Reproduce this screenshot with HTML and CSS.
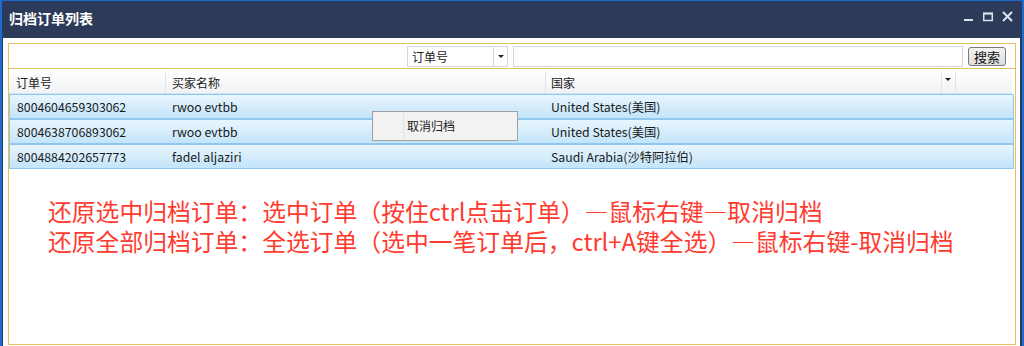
FILE: index.html
```html
<!DOCTYPE html>
<html lang="zh-CN">
<head>
    <meta charset="UTF-8">
    <meta name="viewport" content="width=device-width, initial-scale=1.0">
    <title>归档订单列表</title>
    <link rel="stylesheet" href="styles.css">
</head>
<body>

    <!-- Window -->
    <div class="window">
        <div class="titlebar">
            <span class="title">归档订单列表</span>
            <div class="controls">
                <svg width="10" height="10" viewBox="0 0 10 10"><rect x="0" y="7" width="9" height="2" fill="#dde3ec"/></svg>
                <svg width="10" height="10" viewBox="0 0 10 10"><rect x="0.75" y="1.5" width="8.5" height="7" fill="none" stroke="#dde3ec" stroke-width="1.5"/><rect x="0" y="0.5" width="10" height="2" fill="#dde3ec"/></svg>
                <svg width="11" height="11" viewBox="0 0 11 11"><path d="M1 1 L10 10 M10 1 L1 10" stroke="#dde3ec" stroke-width="2"/></svg>
            </div>
        </div>

        <div class="content">
            <div class="panel">
                <!-- Search bar -->
                <div class="toolbar">
                    <div class="select">
                        <span class="select-text">订单号</span>
                        <span class="select-arrow"></span>
                    </div>
                    <input type="text" class="search-input">
                    <button class="search-btn">搜索</button>
                </div>

                <!-- Grid -->
                <div class="grid-head">
                    <div class="cell c1">订单号</div>
                    <div class="cell c2">买家名称</div>
                    <div class="cell c3">国家</div>
                    <div class="cell c4"><span class="head-arrow"></span></div>
                    <div class="cell c5"></div>
                </div>
                <div class="row">
                    <div class="cell c1">8004604659303062</div>
                    <div class="cell c2">rwoo evtbb</div>
                    <div class="cell c3">United States(美国)</div>
                </div>
                <div class="row">
                    <div class="cell c1">8004638706893062</div>
                    <div class="cell c2">rwoo evtbb</div>
                    <div class="cell c3">United States(美国)</div>
                </div>
                <div class="row">
                    <div class="cell c1">8004884202657773</div>
                    <div class="cell c2">fadel aljaziri</div>
                    <div class="cell c3">Saudi Arabia(沙特阿拉伯)</div>
                </div>

                <!-- Hint -->
                <div class="hint">
                    <p>还原选中归档订单：选中订单（按住ctrl点击订单）—鼠标右键—取消归档</p>
                    <p>还原全部归档订单：全选订单（选中一笔订单后，ctrl+A键全选）—鼠标右键-取消归档</p>
                </div>

                <!-- Right click menu -->
                <div class="context-menu">
                    <div class="menu-icon"></div>
                    <div class="menu-text">取消归档</div>
                </div>
            </div>
        </div>
    </div>

</body>
</html>
```

FILE: styles.css
```css
/* General Styles */
body {
    margin: 0;
    padding: 0;
    font-family: "Noto Sans CJK SC", "Microsoft YaHei", sans-serif;
    font-size: 12px;
    color: #1a1a1a;
    overflow: hidden;
}

.window {
    width: 1024px;
    height: 346px;
    box-sizing: border-box;
    border: 2px solid #1c6bd0;
    border-top-width: 1px;
    border-bottom: none;
    background: #2c3b5a;
    display: flex;
    flex-direction: column;
}

/* Title bar */
.titlebar {
    height: 37px;
    display: flex;
    align-items: center;
    padding-left: 7px;
    flex-shrink: 0;
}

.title {
    color: #ffffff;
    font-size: 14px;
    font-weight: bold;
    margin-top: -3px;
}

.controls {
    margin-left: auto;
    margin-right: 9px;
    display: flex;
    align-items: center;
    gap: 9px;
    margin-top: -6px;
}

/* Content */
.content {
    flex: 1;
    background: #ffffff;
    margin: 0 2px 0 1px;
    padding: 5px 4px 1px 5px;
    display: flex;
    flex-direction: column;
}

.panel {
    flex: 1;
    position: relative;
    border: 1px solid #e6c060;
}

/* Toolbar */
.toolbar {
    height: 25px;
    box-sizing: border-box;
    border-bottom: 1px solid #e6c060;
    display: flex;
    align-items: flex-start;
    justify-content: flex-end;
    padding: 2px 9px 0 0;
    gap: 5px;
}

.select {
    width: 101px;
    height: 21px;
    box-sizing: border-box;
    border: 1px solid #d4d8de;
    display: flex;
    align-items: center;
}

.select-text {
    flex: 1;
    padding-left: 4px;
}

.select-arrow {
    width: 13px;
    height: 19px;
    border-left: 1px solid #d4d8de;
    position: relative;
}

.select-arrow::after {
    content: "";
    position: absolute;
    left: 4px;
    top: 8px;
    border-left: 3px solid transparent;
    border-right: 3px solid transparent;
    border-top: 3px solid #222;
}

.search-input {
    width: 450px;
    height: 21px;
    box-sizing: border-box;
    border: 1px solid #d4d8de;
    padding: 0 3px;
    margin: 0;
    outline: none;
}

.search-btn {
    width: 38px;
    height: 19px;
    margin-top: 1px;
    box-sizing: border-box;
    padding: 0;
    border: 1px solid #7a7a7a;
    border-radius: 3px;
    background: linear-gradient(#f4f4f4, #dddddd);
    font-family: inherit;
    font-size: 13px;
    line-height: 16px;
    color: #111;
}

/* Grid */
.grid-head,
.row {
    display: grid;
    grid-template-columns: 157px 380px 396px 14px 1fr;
}

.grid-head {
    height: 25px;
    box-sizing: border-box;
    padding-top: 2px;
    background: linear-gradient(#ffffff, #f1f2f4);
    border-bottom: 1px solid #d6e4ef;
    margin-right: 3px;
}

.grid-head .cell {
    border-right: 1px solid #e2e4e8;
}

.grid-head .c5 {
    border-right: none;
}

.cell {
    display: flex;
    align-items: center;
    white-space: nowrap;
}

.c1 { padding-left: 7px; }
.c2 { padding-left: 6px; }
.c3 { padding-left: 5px; }

.head-arrow {
    margin-left: 3px;
    border-left: 3px solid transparent;
    border-right: 3px solid transparent;
    border-top: 3px solid #222;
    margin-top: -6px;
}

.row {
    height: 25px;
    box-sizing: border-box;
    border: 1px solid #8fc7f1;
    background: linear-gradient(#e8f6fe, #c3e4fa);
    margin-right: 1px;
    font-size: 12.3px;
}

.row .c1 { padding-left: 7px; }
.row .c2 { padding-left: 5px; }
.row .c3 { padding-left: 4px; }

/* Hint text */
.hint {
    margin-top: 27px;
    padding-left: 39px;
    color: #ff3b2f;
    font-size: 23.8px;
    line-height: 30px;
}

.hint p {
    margin: 0;
    white-space: nowrap;
}

/* Context menu */
.context-menu {
    position: absolute;
    left: 363px;
    top: 67px;
    width: 146px;
    height: 30px;
    box-sizing: border-box;
    border: 1px solid #a0a0a0;
    background: #f2f2f2;
    display: flex;
}

.menu-icon {
    width: 30px;
    height: 100%;
    border-right: 1px solid #e2e2e2;
}

.menu-text {
    padding: 5px 0 0 3px;
}
```
